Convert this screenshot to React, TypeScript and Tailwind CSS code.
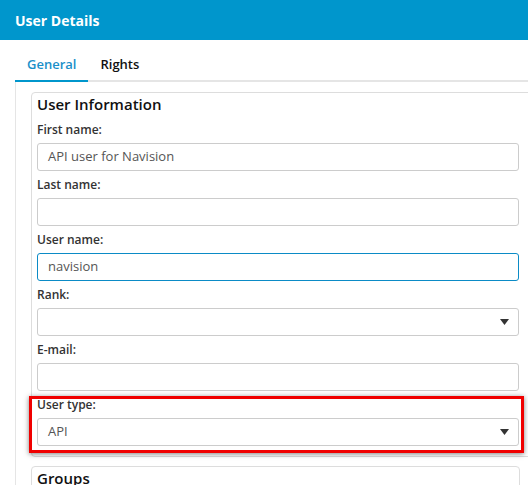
import { useState } from 'react'

type Field = {
  label: string
  value?: string
  kind: 'input' | 'select'
  focused?: boolean
  highlight?: boolean
}

const fields: Field[] = [
  { label: 'First name:', value: 'API user for Navision', kind: 'input' },
  { label: 'Last name:', kind: 'input' },
  { label: 'User name:', value: 'navision', kind: 'input', focused: true },
  { label: 'Rank:', kind: 'select' },
  { label: 'E-mail:', kind: 'input' },
  { label: 'User type:', value: 'API', kind: 'select', highlight: true },
]

function Caret() {
  return (
    <svg width="9" height="6" viewBox="0 0 9 6" className="shrink-0">
      <path d="M0 0h9L4.5 6z" fill="#333" />
    </svg>
  )
}

function FieldRow({ field }: { field: Field }) {
  const border = field.focused ? 'border-[#0b8bc6]' : 'border-[#cccccc]'
  return (
    <div className="relative">
      <div className="flex h-[27px] items-center text-[12px] font-semibold text-[#333]">{field.label}</div>
      <div className={`flex h-[28px] items-center justify-between rounded-[3px] border ${border} bg-white pl-[10px] pr-[9px] text-[13px] text-[#555]`}>
        <span>{field.value ?? ''}</span>
        {field.kind === 'select' && <Caret />}
      </div>
      {field.highlight && (
        <div className="pointer-events-none absolute -left-[8px] -right-[5px] top-[5px] -bottom-[7px] border-[3px] border-[#f00000] shadow-[0_1px_5px_rgba(0,0,0,0.5)]" />
      )}
    </div>
  )
}

export default function App() {
  const [tab, setTab] = useState('General')

  return (
    <div className="h-[485px] w-full overflow-hidden bg-white font-['Open_Sans',sans-serif]">
      <div className="flex h-[40px] items-center bg-[#0096cc] px-[15px] text-[14px] font-bold text-white">User Details</div>

      <div className="pl-[15px]">
        <div className="flex h-[42px] items-end">
          {['General', 'Rights'].map((name) => (
            <button
              key={name}
              onClick={() => setTab(name)}
              className={`flex h-[42px] items-center border-b-2 px-[12px] pt-[10px] text-[13px] font-semibold ${
                tab === name ? 'border-[#0096cc] text-[#1a8fc9]' : 'border-[#e5e5e5] text-[#111]'
              }`}
            >
              {name}
            </button>
          ))}
          <div className="flex-1 border-b-2 border-[#e5e5e5]" />
        </div>

        <div className="border-l border-[#e5e5e5] pl-[15px] pt-[10px]">
          <div className="w-[510px] rounded-[4px] border border-[#dddddd] pb-[10px] pl-[5px]">
            <div className="flex h-[23px] items-center text-[15px] font-semibold text-[#111]">User Information</div>
            <div className="w-[482px]">
              {fields.map((field) => (
                <FieldRow key={field.label} field={field} />
              ))}
            </div>
          </div>

          <div className="mt-[9px] h-[60px] w-[489px] rounded-[4px] border border-[#dddddd] pl-[5px]">
            <div className="flex h-[23px] items-center text-[15px] font-semibold text-[#111]">Groups</div>
          </div>
        </div>
      </div>
    </div>
  )
}
